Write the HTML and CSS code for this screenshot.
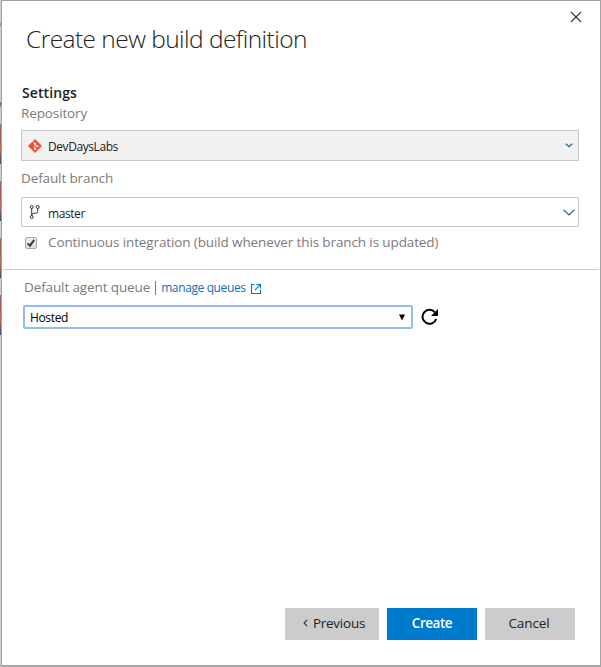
FILE: index.html
```html
<!DOCTYPE html>
<html lang="en">
<head>
<meta charset="utf-8">
<title>Create new build definition</title>
<link rel="stylesheet" href="styles.css">
</head>
<body>
<div class="backdrop"></div>
<main class="dialog">
  <header class="header">
    <h1 class="title">Create new build definition</h1>
    <svg class="close" width="12" height="12" viewBox="0 0 12 12"><path d="M1 1L11 11M11 1L1 11"/></svg>
  </header>
  <section class="settings">
    <h2 class="heading">Settings</h2>
    <div class="label repo-label">Repository</div>
    <div class="picker repo">
      <svg class="git" width="14" height="14" viewBox="0 0 14 14"><path class="diamond" d="M7 0L14 7L7 14L0 7Z"/><path class="mark" d="M5 2.5L7 4.5V10M7 4.8L9.3 7.1"/><circle cx="7" cy="4.8" r="1"/><circle cx="7" cy="10" r="1.1"/><circle cx="9.4" cy="7.2" r="1"/></svg>
      <span class="value repo-value">DevDaysLabs</span>
      <svg class="chevron small" width="8" height="5" viewBox="0 0 8 5"><path d="M.8 .8L4 3.8L7.2 .8"/></svg>
    </div>
    <div class="label branch-label">Default branch</div>
    <div class="picker branch">
      <svg class="fork" width="14" height="14" viewBox="0 0 14 14"><circle cx="2.7" cy="2" r="1.5"/><circle cx="8.7" cy="2" r="1.5"/><circle cx="2.7" cy="12" r="1.5"/><path d="M2.7 3.5V10.5M8.7 3.5V6.4Q8.7 8.3 6.8 8.3H4.8Q2.7 8.3 2.7 10.2"/></svg>
      <span class="value branch-value">master</span>
      <svg class="chevron" width="12" height="7" viewBox="0 0 12 7"><path d="M.6 .7L6 6L11.4 .7"/></svg>
    </div>
    <div class="check-row">
      <span class="checkbox"><svg width="10" height="10" viewBox="0 0 10 10"><path d="M1.6 5.4L4 7.7L8.2 1.9"/></svg></span>
      <span class="label check-label">Continuous integration (build whenever this branch is updated)</span>
    </div>
  </section>
  <section class="queue">
    <div class="queue-line">
      <span class="label queue-label">Default agent queue</span>
      <span class="bar"></span>
      <a class="link">manage queues</a>
      <svg class="external" width="12" height="12" viewBox="0 0 12 12"><path d="M4.5 1.5H1.5V10.5H10.5V7M6.5 1.5H10.5V5.5M10.3 1.7L4.8 7.2"/></svg>
    </div>
    <div class="select-row">
      <div class="select"><span class="select-value">Hosted</span><svg width="6" height="7" viewBox="0 0 6 7"><path d="M0 .5H6L3 6.5Z"/></svg></div>
      <svg class="refresh" width="18" height="18" viewBox="0 0 18 18"><path class="arc" d="M15.2 11A7 7 0 1 1 13.9 4.3"/><path class="head" d="M17 1V8H10Z"/></svg>
    </div>
  </section>
  <footer class="footer">
    <div class="button previous"><svg width="5" height="8" viewBox="0 0 5 8"><path d="M4.2 .9L1 4L4.2 7.1"/></svg><span class="previous-text">Previous</span></div>
    <div class="button create"><span class="create-text">Create</span></div>
    <div class="button cancel"><span class="cancel-text">Cancel</span></div>
  </footer>
</main>
</body>
</html>
```
FILE: styles.css
```css
* { box-sizing: border-box; }
body {
  margin: 0;
  width: 601px;
  height: 667px;
  overflow: hidden;
  display: flex;
  background: linear-gradient(#aaa, #aaa) 0 666px / 601px 1px no-repeat #c8c8c8;
  font-family: "Open Sans", "Noto Sans", sans-serif;
  color: #222;
}
svg { display: block; flex: none; fill: none; }
span, a, h1, h2, .label { white-space: nowrap; }
.backdrop {
  width: 1px;
  height: 666px;
  background:
    linear-gradient(#5aa9d6, #5aa9d6) 0 23px / 1px 3px no-repeat,
    linear-gradient(#66637a, #b07858) 0 102px / 1px 5px no-repeat,
    linear-gradient(#8b7768, #a25b50 30%, #b76d5b 60%, #404b70) 0 124px / 1px 40px no-repeat,
    linear-gradient(#8b7768, #a25b50 30%, #b76d5b 60%, #404b70) 0 181px / 1px 40px no-repeat,
    linear-gradient(#8b7768, #a25b50 30%, #b76d5b 60%, #404b70) 0 238px / 1px 40px no-repeat,
    linear-gradient(#8b7768, #a25b50 30%, #b76d5b 60%, #404b70) 0 295px / 1px 40px no-repeat,
    #cdcdcd;
}
.dialog {
  width: 600px;
  height: 666px;
  border: 1px solid #a3a3a3;
  background: #fff;
  display: flex;
  flex-direction: column;
}
.header { display: flex; justify-content: space-between; height: 81px; padding: 10px 18px 0 24px; }
.title { margin: 10px 0 0; font-size: 24.5px; line-height: 36px; font-weight: 300; letter-spacing: -.55px; }
.close { stroke: #333; stroke-width: 1.1; }
.settings { height: 187px; padding-left: 19px; }
.heading { margin: 0; padding-left: 1px; font-size: 14px; line-height: 21px; font-weight: 600; letter-spacing: .1px; }
.label { font-size: 13.5px; line-height: 20px; color: #7b7b7b; letter-spacing: -.12px; }
.repo-label { height: 27px; }
.picker { width: 558px; border: 1px solid #c8c8c8; display: flex; align-items: center; padding: 0 5px 0 6px; }
.repo { height: 31px; background: #f1f1f1; }
.branch { height: 30px; margin-top: 9px; }
.branch-label { margin-top: 7px; }
.value { margin-left: 6px; padding-top: 2px; font-size: 12px; line-height: 20px; letter-spacing: -.42px; }
.branch-value { padding-top: 4px; }
.value + .chevron { margin-left: auto; }
.chevron { stroke: #28678f; stroke-width: 1.2; }
.branch .chevron { margin-right: -2px; }
.diamond { fill: #f05033; }
.mark { stroke: #fff; stroke-width: .8; }
.git circle { fill: #fff; }
.fork { stroke: #333; stroke-width: 1; }
.branch .fork { margin-left: 1px; margin-right: -1px; }
.check-row { display: flex; align-items: center; height: 20px; margin-top: 6px; padding-left: 4px; }
.check-label { margin-top: -2px; }
.checkbox { width: 12px; height: 12px; border: 1px solid #a5a5a5; border-radius: 2px; background: linear-gradient(#eee, #ddd); margin-right: 11px; }
.checkbox path { stroke: #3a3a3a; stroke-width: 2; }
.queue { border-top: 1px solid #ccc; height: 339px; margin-left: 1px; margin-right: 1px; padding: 8px 0 0 20px; }
.queue-line { display: flex; align-items: center; height: 20px; padding-left: 1px; }
.queue-label { margin-top: -2px; }
.bar { width: 1px; height: 14px; background: #777; margin: 0 5px 0 5px; }
.link { font-size: 12px; line-height: 20px; color: #106ebe; letter-spacing: -.38px; }
.external { margin: 2px 0 0 4px; stroke: #0072c6; stroke-width: 1.1; }
.select-row { display: flex; align-items: center; margin-top: 7px; gap: 8px; }
.select { width: 390px; height: 24px; border: 2px solid #94b9f7; border-radius: 2px; display: flex; align-items: center; justify-content: space-between; padding: 0 6px 0 5px; color: #000; }
.select path { fill: #000; }
.select-value { padding-top: 2px; font-size: 12px; line-height: 18px; letter-spacing: -.35px; }
.arc { stroke: #000; stroke-width: 2; }
.head { fill: #000; }
.footer { display: flex; justify-content: flex-end; gap: 8px; padding-right: 25px; }
.button { height: 32px; width: 90px; background: #ccc; display: flex; align-items: center; justify-content: center; font-size: 13.5px; line-height: 20px; letter-spacing: -.12px; padding-right: 2px; padding-bottom: 2px; }
.previous { width: 94px; gap: 5px; padding: 0 0 2px 4px; letter-spacing: -.25px; }
.previous path { stroke: #333; stroke-width: 1.1; }
.create { background: #007acc; color: #fff; font-weight: 600; padding-right: 0; letter-spacing: -.45px; }
```
